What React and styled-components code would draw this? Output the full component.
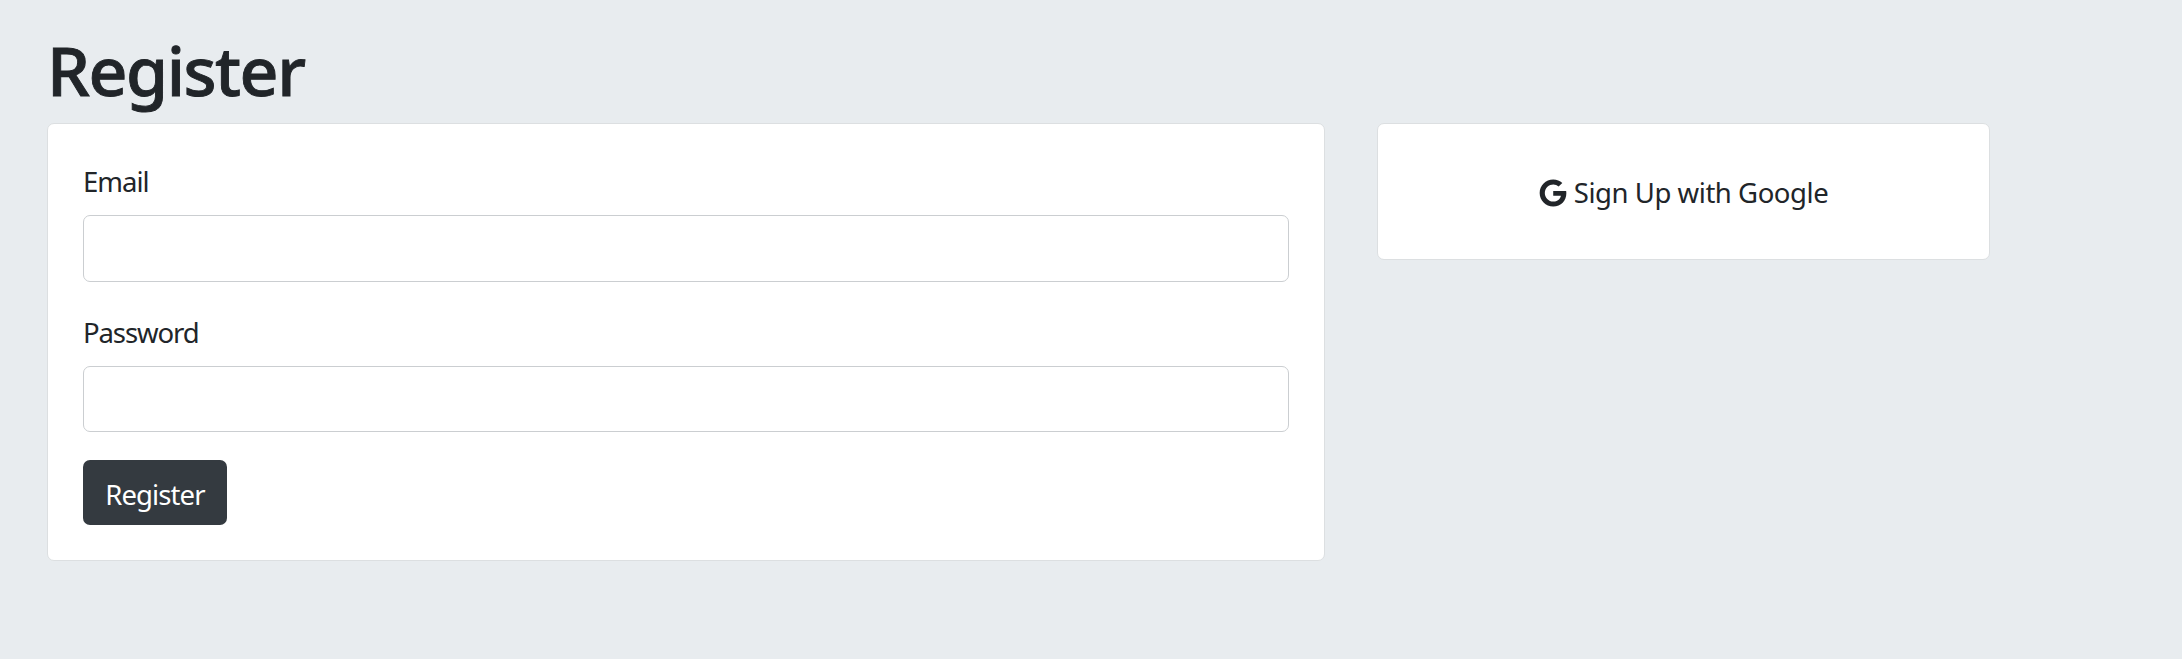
import React from 'react';
import styled, { createGlobalStyle } from 'styled-components';
import { FaGoogle } from 'react-icons/fa';

const GlobalStyle = createGlobalStyle`
  *, *::before, *::after { box-sizing: border-box; }
  body {
    margin: 0;
    background: #e8ecef;
    color: #212529;
    font-family: "Noto Sans", "Open Sans", sans-serif;
    font-size: 27.5px;
    line-height: 42px;
  }
`;

const Page = styled.main`
  min-height: 659px;
  padding: 28px 192px 0 47px;
`;

const Title = styled.h1`
  margin: 0 0 11px;
  font-size: 68px;
  font-weight: 500;
  line-height: 84px;
  letter-spacing: -1.5px;
  -webkit-text-stroke: 0.9px currentColor;
`;

const Columns = styled.div`
  display: grid;
  grid-template-columns: 1278px 613px;
  column-gap: 52px;
  align-items: start;
`;

const Card = styled.section`
  background: #fff;
  border: 1px solid #dcdfe1;
  border-radius: 7px;
`;

const FormCard = styled(Card)`
  height: 438px;
  padding: 36px 35px;
`;

const SocialCard = styled(Card)`
  display: flex;
  height: 137px;
  align-items: center;
  justify-content: center;
`;

const Field = styled.div`
  display: flex;
  flex-direction: column;
  margin-bottom: ${(p) => p.$gap}px;
`;

const Label = styled.label`
  padding-top: 1px;
  margin-bottom: 12px;
  letter-spacing: ${(p) => p.$tracking};
`;

const Input = styled.input`
  width: 100%;
  height: ${(p) => p.$height}px;
  padding: 10px 21px;
  border: 1px solid #cbced1;
  border-radius: 7px;
  background: #fff;
  font: inherit;
  color: inherit;
  outline: none;
`;

const Button = styled.button`
  display: block;
  width: 144px;
  height: 65px;
  padding: 4px 0 0;
  border: 0;
  border-radius: 7px;
  background: #343a40;
  color: #fff;
  font: inherit;
  letter-spacing: -0.9px;
`;

const GoogleLink = styled.a`
  display: flex;
  align-items: center;
  gap: 7px;
  padding-top: 2px;
  letter-spacing: -0.45px;
  white-space: nowrap;
`;

export default function App() {
  return (
    <Page>
      <GlobalStyle />
      <Title>Register</Title>
      <Columns>
        <FormCard>
          <Field $gap={29}>
            <Label htmlFor="email" $tracking="-1px">Email</Label>
            <Input id="email" type="email" $height={67} />
          </Field>
          <Field $gap={28}>
            <Label htmlFor="password" $tracking="-1.1px">Password</Label>
            <Input id="password" type="password" $height={66} />
          </Field>
          <Button type="button">Register</Button>
        </FormCard>
        <SocialCard>
          <GoogleLink>
            <FaGoogle size={28} />
            <span>Sign Up with Google</span>
          </GoogleLink>
        </SocialCard>
      </Columns>
    </Page>
  );
}
